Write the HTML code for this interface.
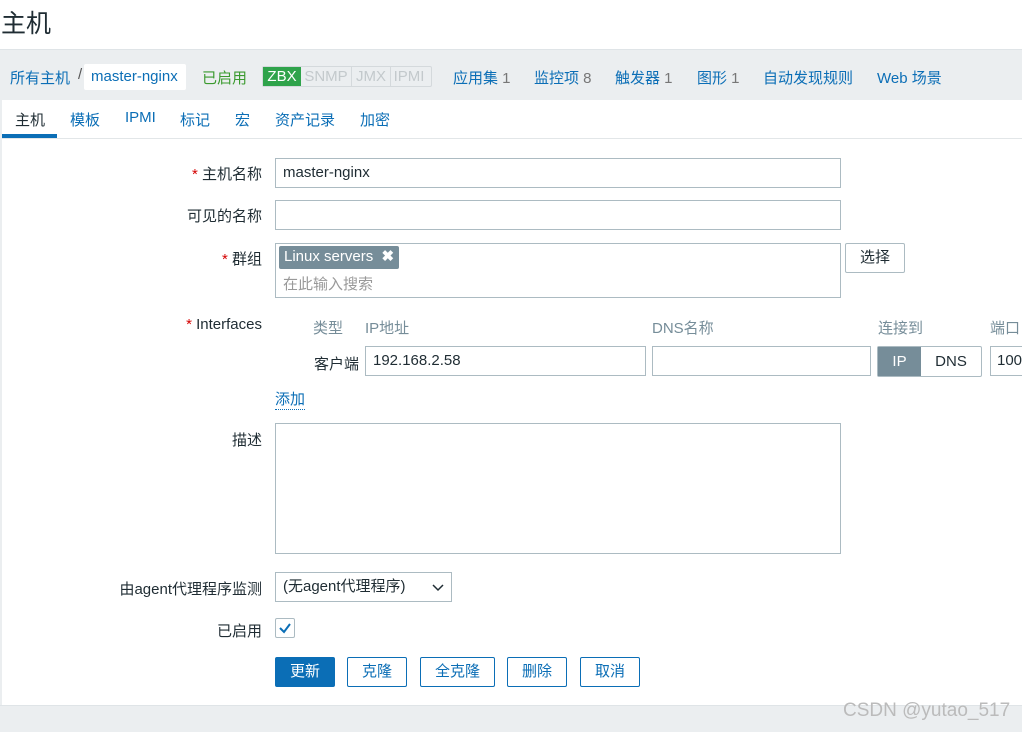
<!DOCTYPE html>
<html><head><meta charset="utf-8"><style>
*{box-sizing:border-box;margin:0;padding:0}
body{width:1022px;height:732px;overflow:hidden;background:#fff;font-family:"Liberation Sans","Noto Sans CJK SC",sans-serif;font-size:15px;color:#1f2c33;position:relative}
.a{position:absolute;white-space:nowrap}
.blue{color:#0b6eb6}
.inp{position:absolute;border:1px solid #acbbc2;background:#fff;height:30px;padding:0 7px;line-height:28px}
.lbl{position:absolute;text-align:right;width:262px;left:0}
.req{color:#d40000}
.btn{position:absolute;height:30px;border:1px solid #0b6eb6;border-radius:2px;color:#0b6eb6;text-align:center;line-height:28px;background:#fff}
</style></head><body>
<div class="a" style="left:1px;top:4px;font-size:25px;color:#1f2c33">主机</div>
<div class="a" style="left:0;top:49px;width:1022px;height:51px;background:#ebeef0;border-top:1px solid #dfe4e7"></div>
<div class="a blue" style="left:10px;top:67px">所有主机</div>
<div class="a" style="left:78px;top:66px;color:#555">/</div>
<div class="a blue" style="left:84px;top:64px;width:102px;height:26px;background:#fff;border-radius:2px;padding-left:7px;line-height:26px">master-nginx</div>
<div class="a" style="left:202px;top:67px;color:#3a9a2e">已启用</div>
<div class="a" style="left:262px;top:66px;height:21px;width:170px;border:1px solid #d4d9dc;border-radius:2px;font-size:15px;line-height:19px;color:#c3c9cc">
<span style="display:inline-block;background:#2fa34b;color:#fff;width:38px;text-align:center">ZBX</span><span style="display:inline-block;width:51px;text-align:center;border-right:1px solid #d4d9dc">SNMP</span><span style="display:inline-block;width:39px;text-align:center;border-right:1px solid #d4d9dc">JMX</span><span style="display:inline-block;width:36px;text-align:center">IPMI</span></div>
<div class="a blue" style="left:453px;top:67px">应用集 <span style="color:#777">1</span></div>
<div class="a blue" style="left:534px;top:67px">监控项 <span style="color:#777">8</span></div>
<div class="a blue" style="left:615px;top:67px">触发器 <span style="color:#777">1</span></div>
<div class="a blue" style="left:697px;top:67px">图形 <span style="color:#777">1</span></div>
<div class="a blue" style="left:763px;top:67px">自动发现规则</div>
<div class="a blue" style="left:877px;top:67px">Web 场景</div>
<div class="a" style="left:2px;top:138px;width:1020px;height:1px;background:#e2e6e8"></div>
<div class="a" style="left:2px;top:134px;width:55px;height:4px;background:#0b6eb6"></div>
<div class="a" style="left:15px;top:109px">主机</div>
<div class="a blue" style="left:70px;top:109px">模板</div>
<div class="a blue" style="left:125px;top:109px">IPMI</div>
<div class="a blue" style="left:180px;top:109px">标记</div>
<div class="a blue" style="left:235px;top:109px">宏</div>
<div class="a blue" style="left:275px;top:109px">资产记录</div>
<div class="a blue" style="left:360px;top:109px">加密</div>
<div class="lbl" style="top:163px"><span class="req">*</span> 主机名称</div>
<div class="inp" style="left:275px;top:158px;width:566px">master-nginx</div>
<div class="lbl" style="top:205px">可见的名称</div>
<div class="inp" style="left:275px;top:200px;width:566px"></div>
<div class="lbl" style="top:248px"><span class="req">*</span> 群组</div>
<div class="inp" style="left:275px;top:243px;width:566px;height:55px;padding:0"></div>
<div class="a" style="left:279px;top:246px;height:23px;background:#768d99;color:#fff;border-radius:2px;padding:0 5px;line-height:22px">Linux servers &nbsp;<b>✖</b></div>
<div class="a" style="left:283px;top:273px;color:#999">在此输入搜索</div>
<div class="btn" style="left:845px;top:243px;width:60px;border-color:#acbbc2;color:#1f2c33">选择</div>
<div class="lbl" style="top:316px"><span class="req">*</span> Interfaces</div>
<div class="a" style="left:313px;top:317px;color:#768d99">类型</div>
<div class="a" style="left:365px;top:317px;color:#768d99">IP地址</div>
<div class="a" style="left:652px;top:317px;color:#768d99">DNS名称</div>
<div class="a" style="left:878px;top:317px;color:#768d99">连接到</div>
<div class="a" style="left:990px;top:317px;color:#768d99">端口</div>
<div class="a" style="left:314px;top:353px">客户端</div>
<div class="inp" style="left:365px;top:346px;width:281px">192.168.2.58</div>
<div class="inp" style="left:652px;top:346px;width:219px"></div>
<div class="a" style="left:877px;top:346px;width:105px;height:31px;border:1px solid #acbbc2;border-radius:2px;line-height:29px">
<span style="display:inline-block;width:43px;background:#768d99;color:#fff;text-align:center">IP</span><span style="display:inline-block;width:60px;text-align:center">DNS</span></div>
<div class="inp" style="left:990px;top:346px;width:40px;padding-left:6px">100</div>
<div class="a blue" style="left:275px;top:391px;border-bottom:1px dotted #0b6eb6;line-height:18px">添加</div>
<div class="lbl" style="top:429px">描述</div>
<div class="inp" style="left:275px;top:423px;width:566px;height:131px"></div>
<div class="lbl" style="top:578px">由agent代理程序监测</div>
<div class="inp" style="left:275px;top:572px;width:177px">(无agent代理程序)<svg width="12" height="8" style="position:absolute;right:7px;top:11px"><path d="M1 1 L6 6 L11 1" stroke="#1f2c33" stroke-width="1.5" fill="none"/></svg></div>
<div class="lbl" style="top:620px">已启用</div>
<div class="a" style="left:275px;top:618px;width:20px;height:20px;border:1px solid #acbbc2;border-radius:2px">
<svg width="18" height="18" style="position:absolute;left:0;top:0"><path d="M4 9 L8 13 L14 5" stroke="#0b6eb6" stroke-width="2" fill="none"/></svg></div>
<div class="btn" style="left:275px;top:657px;width:60px;background:#0b6eb6;color:#fff">更新</div>
<div class="btn" style="left:347px;top:657px;width:60px">克隆</div>
<div class="btn" style="left:420px;top:657px;width:75px">全克隆</div>
<div class="btn" style="left:507px;top:657px;width:60px">删除</div>
<div class="btn" style="left:580px;top:657px;width:60px">取消</div>
<div class="a" style="left:0;top:705px;width:1022px;height:27px;background:#ebeef0;border-top:1px solid #dfe4e7"></div>
<div class="a" style="left:0;top:99px;width:2px;height:606px;background:#ebeef0"></div>
<div class="a" style="left:843px;top:700px;font-size:19px;color:#bbb">CSDN @yutao_517</div>
</body></html>
